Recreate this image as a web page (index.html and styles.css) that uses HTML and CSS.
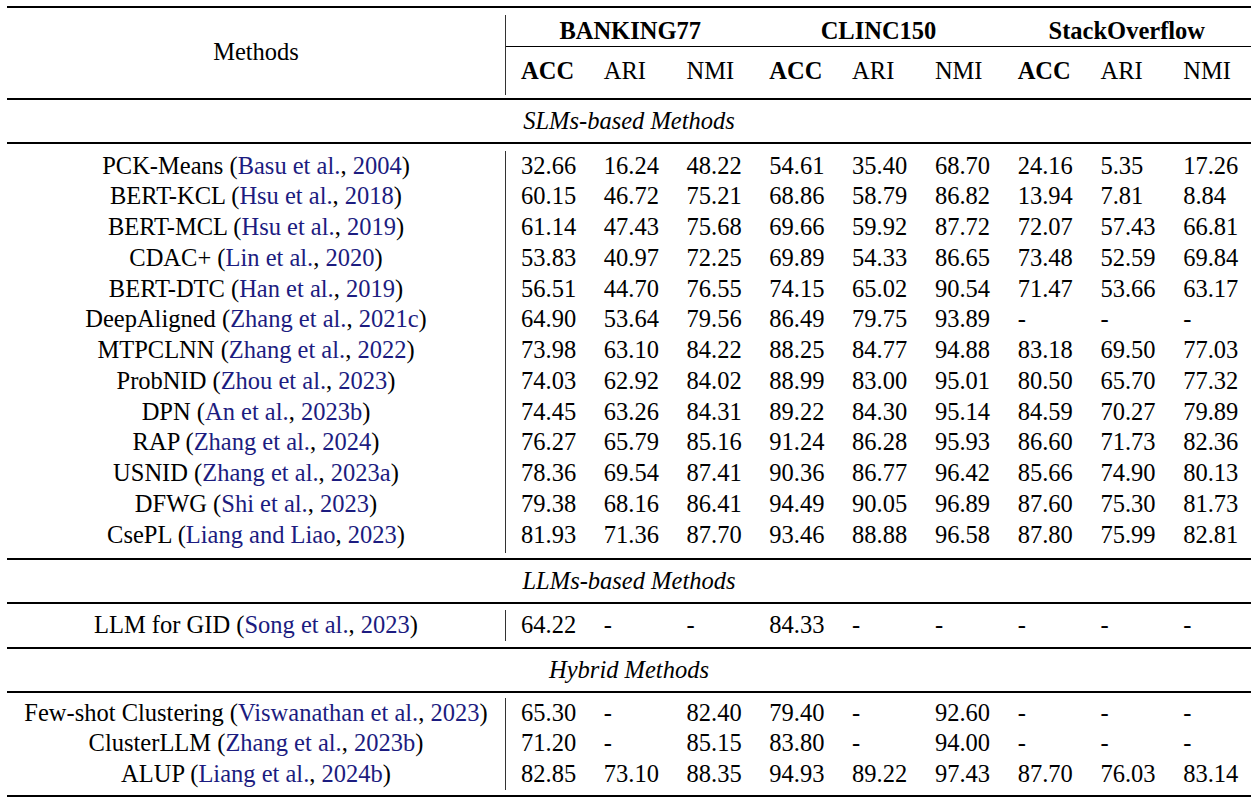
FILE: index.html
```html
<!DOCTYPE html>
<html lang="en">
<head>
<meta charset="utf-8">
<title>Results table</title>
<link rel="stylesheet" href="styles.css">
</head>
<body>
<div class="page">
  <div class="rule-heavy"></div>
  <div class="head">
    <div class="head-methods">Methods</div>
    <div class="head-data">
      <div class="groups">
        <div>BANKING77</div>
        <div>CLINC150</div>
        <div>StackOverflow</div>
      </div>
      <div class="metrics">
        <div class="b">ACC</div><div>ARI</div><div>NMI</div>
        <div class="b">ACC</div><div>ARI</div><div>NMI</div>
        <div class="b">ACC</div><div>ARI</div><div>NMI</div>
      </div>
    </div>
  </div>
  <div class="rule"></div>
  <div class="sec-title">SLMs-based Methods</div>
  <div class="rule"></div>
  <div class="sec sec-slm">
    <div class="names">
      <div>PCK-Means (<a>Basu et al.</a>, <a>2004</a>)</div>
      <div>BERT-KCL (<a>Hsu et al.</a>, <a>2018</a>)</div>
      <div>BERT-MCL (<a>Hsu et al.</a>, <a>2019</a>)</div>
      <div>CDAC+ (<a>Lin et al.</a>, <a>2020</a>)</div>
      <div>BERT-DTC (<a>Han et al.</a>, <a>2019</a>)</div>
      <div>DeepAligned (<a>Zhang et al.</a>, <a>2021c</a>)</div>
      <div>MTPCLNN (<a>Zhang et al.</a>, <a>2022</a>)</div>
      <div>ProbNID (<a>Zhou et al.</a>, <a>2023</a>)</div>
      <div>DPN (<a>An et al.</a>, <a>2023b</a>)</div>
      <div>RAP (<a>Zhang et al.</a>, <a>2024</a>)</div>
      <div>USNID (<a>Zhang et al.</a>, <a>2023a</a>)</div>
      <div>DFWG (<a>Shi et al.</a>, <a>2023</a>)</div>
      <div>CsePL (<a>Liang and Liao</a>, <a>2023</a>)</div>
    </div>
    <div class="vals">
      <div>32.66</div><div>16.24</div><div>48.22</div><div>54.61</div><div>35.40</div><div>68.70</div><div>24.16</div><div>5.35</div><div>17.26</div>
      <div>60.15</div><div>46.72</div><div>75.21</div><div>68.86</div><div>58.79</div><div>86.82</div><div>13.94</div><div>7.81</div><div>8.84</div>
      <div>61.14</div><div>47.43</div><div>75.68</div><div>69.66</div><div>59.92</div><div>87.72</div><div>72.07</div><div>57.43</div><div>66.81</div>
      <div>53.83</div><div>40.97</div><div>72.25</div><div>69.89</div><div>54.33</div><div>86.65</div><div>73.48</div><div>52.59</div><div>69.84</div>
      <div>56.51</div><div>44.70</div><div>76.55</div><div>74.15</div><div>65.02</div><div>90.54</div><div>71.47</div><div>53.66</div><div>63.17</div>
      <div>64.90</div><div>53.64</div><div>79.56</div><div>86.49</div><div>79.75</div><div>93.89</div><div>-</div><div>-</div><div>-</div>
      <div>73.98</div><div>63.10</div><div>84.22</div><div>88.25</div><div>84.77</div><div>94.88</div><div>83.18</div><div>69.50</div><div>77.03</div>
      <div>74.03</div><div>62.92</div><div>84.02</div><div>88.99</div><div>83.00</div><div>95.01</div><div>80.50</div><div>65.70</div><div>77.32</div>
      <div>74.45</div><div>63.26</div><div>84.31</div><div>89.22</div><div>84.30</div><div>95.14</div><div>84.59</div><div>70.27</div><div>79.89</div>
      <div>76.27</div><div>65.79</div><div>85.16</div><div>91.24</div><div>86.28</div><div>95.93</div><div>86.60</div><div>71.73</div><div>82.36</div>
      <div>78.36</div><div>69.54</div><div>87.41</div><div>90.36</div><div>86.77</div><div>96.42</div><div>85.66</div><div>74.90</div><div>80.13</div>
      <div>79.38</div><div>68.16</div><div>86.41</div><div>94.49</div><div>90.05</div><div>96.89</div><div>87.60</div><div>75.30</div><div>81.73</div>
      <div>81.93</div><div>71.36</div><div>87.70</div><div>93.46</div><div>88.88</div><div>96.58</div><div>87.80</div><div>75.99</div><div>82.81</div>
    </div>
  </div>
  <div class="rule"></div>
  <div class="sec-title">LLMs-based Methods</div>
  <div class="rule"></div>
  <div class="sec sec-llm">
    <div class="names">
      <div>LLM for GID (<a>Song et al.</a>, <a>2023</a>)</div>
    </div>
    <div class="vals">
      <div>64.22</div><div>-</div><div>-</div><div>84.33</div><div>-</div><div>-</div><div>-</div><div>-</div><div>-</div>
    </div>
  </div>
  <div class="rule"></div>
  <div class="sec-title">Hybrid Methods</div>
  <div class="rule"></div>
  <div class="sec sec-hyb">
    <div class="names">
      <div>Few-shot Clustering (<a>Viswanathan et al.</a>, <a>2023</a>)</div>
      <div>ClusterLLM (<a>Zhang et al.</a>, <a>2023b</a>)</div>
      <div>ALUP (<a>Liang et al.</a>, <a>2024b</a>)</div>
    </div>
    <div class="vals">
      <div>65.30</div><div>-</div><div>82.40</div><div>79.40</div><div>-</div><div>92.60</div><div>-</div><div>-</div><div>-</div>
      <div>71.20</div><div>-</div><div>85.15</div><div>83.80</div><div>-</div><div>94.00</div><div>-</div><div>-</div><div>-</div>
      <div>82.85</div><div>73.10</div><div>88.35</div><div>94.93</div><div>89.22</div><div>97.43</div><div>87.70</div><div>76.03</div><div>83.14</div>
    </div>
  </div>
  <div class="rule-heavy"></div>
</div>
</body>
</html>
```

FILE: styles.css
```css
html, body {
  margin: 0;
  padding: 0;
  background: #ffffff;
}

.page {
  width: 1244px;
  margin-left: 7px;
  padding-top: 6px;
  font-family: "Liberation Serif", "Times New Roman", Times, serif;
  font-size: 24.5px;
  color: #000000;
}

.rule-heavy {
  height: 2px;
  background: #000000;
}

.rule {
  height: 1.5px;
  background: #000000;
}

.head {
  display: flex;
  padding: 7px 0 3px;
}

.head-methods {
  width: 498px;
  flex: none;
  display: flex;
  align-items: center;
  justify-content: center;
  padding-bottom: 6px;
  box-sizing: border-box;
}

.head-data {
  flex: 1;
  border-left: 1px solid #333333;
}

.groups {
  display: grid;
  grid-template-columns: repeat(3, 1fr);
  height: 31px;
  line-height: 31px;
  border-bottom: 1px solid #000000;
  font-weight: bold;
  text-align: center;
}

.metrics {
  display: grid;
  grid-template-columns: repeat(9, 1fr);
  height: 48px;
  line-height: 48px;
}

.metrics > div {
  padding-left: 15px;
}

.b {
  font-weight: bold;
}

.sec-title {
  height: 42.5px;
  line-height: 42.5px;
  text-align: center;
  font-style: italic;
}

.sec {
  display: flex;
}

.sec-slm {
  padding: 7px 0 5px;
}

.sec-slm .vals {
  padding-bottom: 3px;
}

.sec-llm {
  padding: 6px 0 6.5px;
}

.sec-hyb {
  padding: 5px 0 5.25px;
}

.names {
  width: 498px;
  flex: none;
  text-align: center;
}

.names > div {
  height: 30.75px;
  line-height: 30.75px;
  white-space: nowrap;
}

.names a {
  color: #1c1c80;
  text-decoration: none;
}

.vals {
  flex: 1;
  border-left: 1px solid #333333;
  display: grid;
  grid-template-columns: repeat(9, 1fr);
  grid-auto-rows: 30.75px;
  line-height: 30.75px;
}

.vals > div {
  padding-left: 15px;
  white-space: nowrap;
}
```
